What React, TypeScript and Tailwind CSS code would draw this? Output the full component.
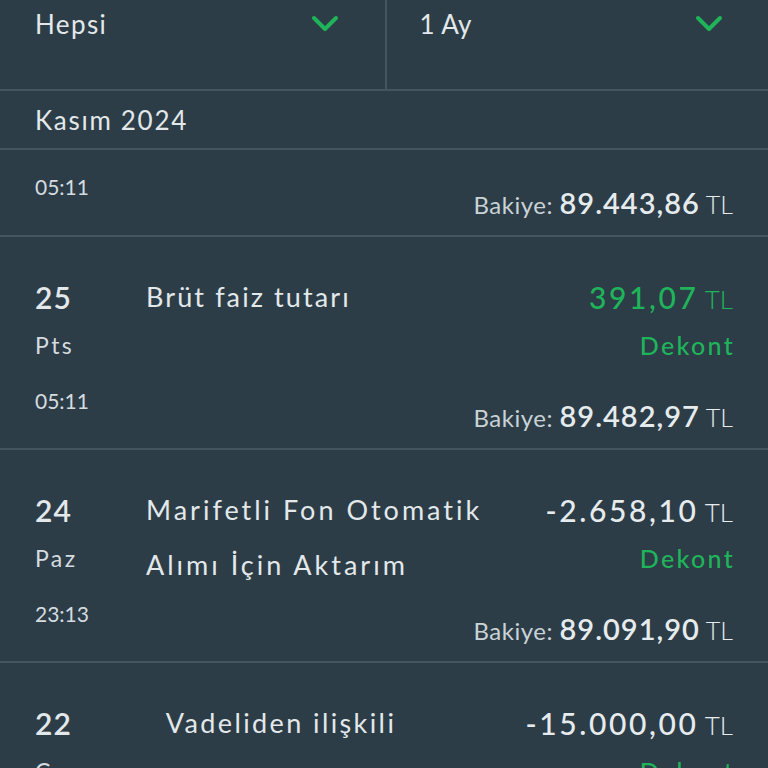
import React from "react";

const Chevron = () => (
  <svg width="28" height="18" viewBox="0 0 28 18" fill="none">
    <path d="M3 3 L14 14 L25 3" stroke="#1fb45a" strokeWidth="4" strokeLinecap="round" strokeLinejoin="round" />
  </svg>
);

const Balance = ({ v }: { v: string }) => (
  <div className="leading-[48px] whitespace-nowrap">
    <span className="text-[24px] tracking-[0.5px] text-[#c9d2d7]">Bakiye: </span>
    <span className="text-[29px] font-semibold tracking-[1px] text-[#e6ebee]">{v}</span>
    <span className="text-[25px] font-light text-[#e6ebee]"> TL</span>
  </div>
);

type Row = {
  day: string;
  wd: string;
  time: string;
  desc: string[];
  amount: string;
  green?: boolean;
  bal: string;
  center?: boolean;
  track: string;
};

const rows: Row[] = [
  { day: "25", wd: "Pts", time: "05:11", desc: ["Brüt faiz tutarı"], amount: "391,07", green: true, bal: "89.482,97", track: "tracking-[2.1px]" },
  { day: "24", wd: "Paz", time: "23:13", desc: ["Marifetli Fon Otomatik", "Alımı İçin Aktarım"], amount: "-2.658,10", bal: "89.091,90", track: "tracking-[3px]" },
  { day: "22", wd: "Cum", time: "10:02", desc: ["Vadeliden ilişkili", "hesaba para aktarımı"], amount: "-15.000,00", bal: "74.091,90", center: true, track: "tracking-[2.4px]" },
];

export default function App() {
  return (
    <div className="w-[768px] h-[768px] overflow-hidden bg-[#2c3d47] text-[#e3e8eb]" style={{ fontFamily: "Lato, 'Noto Sans', sans-serif" }}>
      {/* filter bar */}
      <div className="flex h-[91px] border-b-2 border-[#43555f]">
        <div className="flex-1 flex items-start justify-between pl-[35px] pr-[46px] border-r-2 border-[#43555f]">
          <span className="text-[26px] leading-[48px] tracking-[1.4px]">Hepsi</span>
          <div className="mt-[15px]"><Chevron /></div>
        </div>
        <div className="flex-1 flex items-start justify-between pl-[33px] pr-[45px]">
          <span className="text-[26px] leading-[48px] tracking-[0.4px]">1 Ay</span>
          <div className="mt-[15px]"><Chevron /></div>
        </div>
      </div>
      {/* month header */}
      <div className="h-[59px] border-b-2 border-[#43555f] pl-[35px] flex items-center">
        <span className="text-[26px] leading-[40px] tracking-[1.7px]">Kasım 2024</span>
      </div>
      {/* partial row */}
      <div className="h-[87px] border-b-2 border-[#43555f] flex justify-between px-[35px]">
        <div className="text-[21px] leading-[48px] text-[#d5dce0] pt-[13px]">05:11</div>
        <div className="pt-[29px]"><Balance v="89.443,86" /></div>
      </div>
      {rows.map((r) => (
        <div key={r.day} className="h-[213px] shrink-0 border-b-2 border-[#43555f] flex px-[35px]">
          <div className="w-[110px] shrink-0 pt-[36px] flex flex-col">
            <div className="text-[30px] font-semibold leading-[48px] tracking-[1px]">{r.day}</div>
            <div className="text-[23px] leading-[48px] tracking-[2.4px] text-[#d5dce0]">{r.wd}</div>
            <div className="text-[21px] leading-[48px] text-[#d5dce0] mt-[8px]">{r.time}</div>
          </div>
          <div className="flex-1 min-w-0 pt-[32px] pl-[1px]">
            <div className={r.center ? "w-[270px] text-center" : ""}>
              {r.desc.map((d) => (
                <div key={d} className={"text-[27px] leading-[55px] whitespace-nowrap " + r.track}>{d}</div>
              ))}
            </div>
          </div>
          <div className="shrink-0 pt-[36px] flex flex-col items-end">
            <div className={"leading-[48px] whitespace-nowrap " + (r.green ? "text-[#1fb45a]" : "text-[#e6ebee]")}>
              <span className="text-[30px] font-medium tracking-[2.6px]">{r.amount}</span>
              <span className="text-[26px] font-light"> TL</span>
            </div>
            <div className="text-[25px] font-medium leading-[48px] tracking-[2.3px] text-[#1fb45a] -mt-[6px] mr-[-2px]">Dekont</div>
            <div className="mt-[23px]"><Balance v={r.bal} /></div>
          </div>
        </div>
      ))}
    </div>
  );
}
